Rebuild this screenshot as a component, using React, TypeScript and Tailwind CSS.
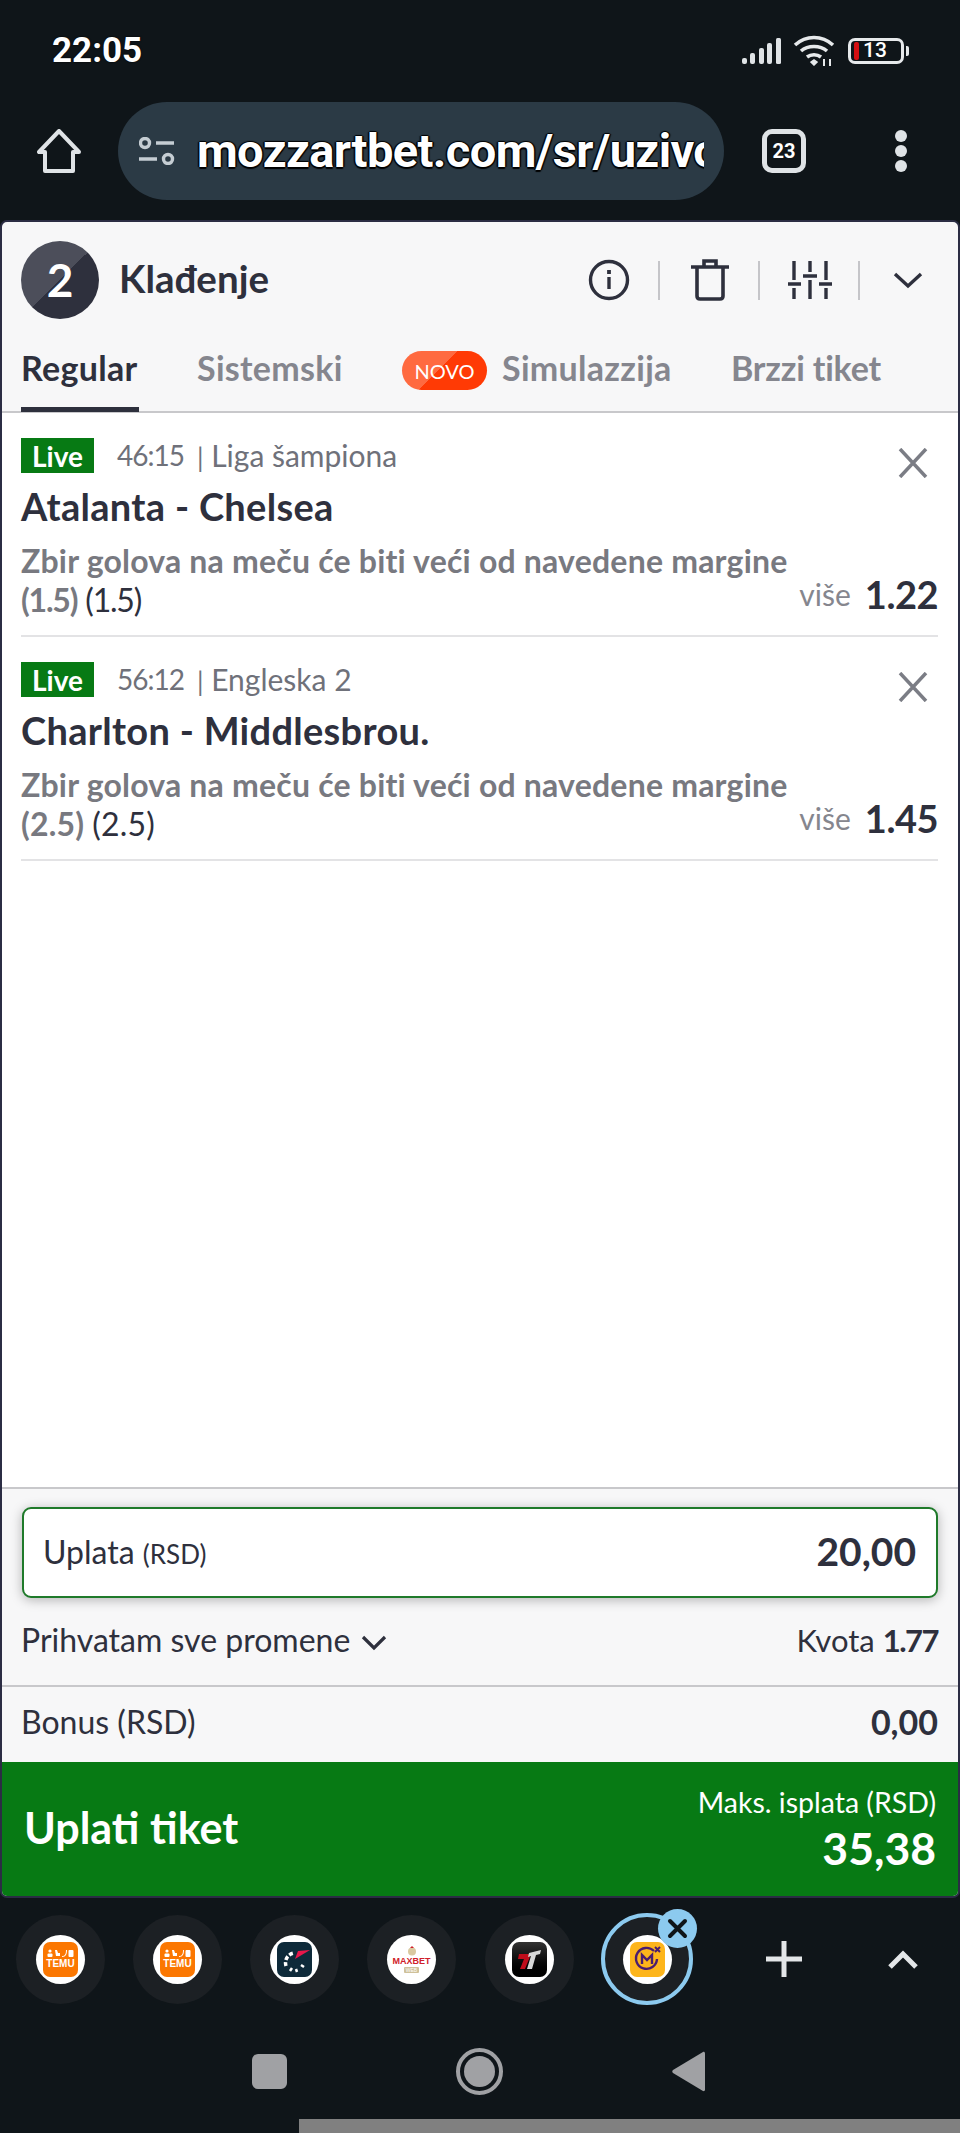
import { JSX, ReactNode } from "react";

const sans = "font-['Lato','Noto_Sans',sans-serif]";

const TemuIcon = (): JSX.Element => (
  <div className="flex h-[35px] w-[35px] flex-col items-center justify-center rounded-[7px] bg-[#fb7701] text-white">
    <svg width="27" height="9" viewBox="0 0 27 9" fill="#fff">
      <circle cx="3" cy="2" r="1.6" />
      <rect x="0.5" y="4.5" width="5" height="3.5" rx="1" />
      <path d="M8 1h2l1 3h2v3H9z" />
      <path d="M15 7c3 0 4-2 4-6h1c0 4-1 7-5 7z" />
      <rect x="21.5" y="1" width="5" height="7" rx="1" />
    </svg>
    <span className="font-['Liberation_Sans',sans-serif] text-[10px] leading-[11px] font-bold">TEMU</span>
  </div>
);

const GaugeIcon = (): JSX.Element => (
  <div className="h-[35px] w-[35px] rounded-[7px] bg-[#0e2a3a]">
    <svg width="35" height="35" viewBox="0 0 35 35" fill="none">
      <path d="M9 24a10 10 0 0 1 8-13" stroke="#fff" strokeWidth="3.5" strokeDasharray="4 2" />
      <path d="M13 29l2-3M20 30l-1-3M27 25l-3-2" stroke="#fff" strokeWidth="2.5" />
      <path d="M18 17l3-8 12-1z" fill="#e8174b" />
    </svg>
  </div>
);

const MaxbetIcon = (): JSX.Element => (
  <div className="flex h-[35px] w-[40px] flex-col items-center justify-center">
    <svg width="10" height="10" viewBox="0 0 10 10">
      <circle cx="5" cy="5.5" r="4" fill="#d9c9a0" />
      <path d="M3 2l2-2 2 2z" fill="#d0202a" />
    </svg>
    <span className="font-['Liberation_Sans',sans-serif] text-[9px] leading-[10px] font-bold text-[#d0202a]">MAXBET</span>
    <span className="mt-[1px] rounded-[1px] bg-[#cfc19a] px-[2px] font-['Liberation_Sans',sans-serif] text-[5px] leading-[6px] text-white">WEB</span>
  </div>
);

const TopIcon = (): JSX.Element => (
  <div className="h-[35px] w-[35px] rounded-[7px] bg-gradient-to-b from-[#333] to-black">
    <svg width="35" height="35" viewBox="0 0 35 35">
      <path d="M7 12h12l-6 15H8l4-10H6z" fill="#c00d1b" />
      <path d="M17 11l12-3-1 4-4 1-4 14h-5l4-13-3 1z" fill="#d8d8d8" />
    </svg>
  </div>
);

const MozzartIcon = (): JSX.Element => (
  <div className="h-[35px] w-[35px] rounded-[7px] bg-[#fdb51b]">
    <svg width="35" height="35" viewBox="0 0 35 35" fill="none">
      <path d="M24 9a10.5 10.5 0 1 0 3 8" stroke="#4b1d6e" strokeWidth="2.4" />
      <path d="M12 22v-9l5 5 5-5v9" stroke="#4b1d6e" strokeWidth="2.4" />
      <path d="M25 5l5 5M30 5l-5 5" stroke="#4b1d6e" strokeWidth="2" />
    </svg>
  </div>
);

const TabCircle = ({ children, active }: { children: ReactNode; active?: boolean }): JSX.Element => (
  <div
    className={
      active
        ? "relative flex h-[92px] w-[92px] shrink-0 items-center justify-center rounded-full border-[4px] border-[#8ccaef] bg-[#1c2024]"
        : "flex h-[89px] w-[89px] shrink-0 items-center justify-center rounded-full bg-[#1c2024]"
    }
  >
    <div className="flex h-[49px] w-[49px] items-center justify-center rounded-full bg-white">{children}</div>
    {active && (
      <div className="absolute top-[-8px] right-[-8px] flex h-[39px] w-[39px] items-center justify-center rounded-full bg-[#8ccaef]">
        <svg width="21" height="21" viewBox="0 0 21 21" stroke="#0f1519" strokeWidth="4" strokeLinecap="round">
          <path d="M3 3l15 15M18 3L3 18" />
        </svg>
      </div>
    )}
  </div>
);

const Bet = ({
  time,
  league,
  match,
  margin,
  marginClass,
  odd,
}: {
  time: string;
  league: string;
  match: string;
  margin: string;
  marginClass: string;
  odd: string;
}): JSX.Element => (
  <div className="flex h-[224px] flex-col border-b-2 border-[#e3e3e5] pt-[25px]">
    <div className="flex h-[35px] items-start">
      <div className="flex h-[35px] w-[73px] items-center justify-center bg-[#077a14] text-[28px] leading-none font-bold text-white">
        Live
      </div>
      <span className="ml-[23px] text-[28px] leading-[35px] tracking-[-1px] text-[#6f717a]">{time}</span>
      <span className="ml-[13px] text-[30px] leading-[35px] text-[#6f717a]">
        <span className="text-[26px]">|</span> {league}
      </span>
      <svg className="mt-[10px] mr-[10px] ml-auto" width="30" height="30" viewBox="0 0 30 30" stroke="#7b7d85" strokeWidth="3.5">
        <path d="M2 1l26 28M28 1L2 29" />
      </svg>
    </div>
    <div className="mt-[11px] text-[38px] leading-[44px] font-bold tracking-[0.3px] text-[#2e303d]">{match}</div>
    <div className="mt-[13px] flex items-end justify-between">
      <div className="w-[780px] text-[32px] leading-[39px] font-bold tracking-[0.2px] whitespace-nowrap text-[#787980]">
        Zbir golova na meču će biti veći od navedene margine
        <br />
        <span className={marginClass}>({margin})</span>{" "}
        <span className={`font-normal text-[#2e303d] ${marginClass}`}>({margin})</span>
      </div>
      <div className="flex items-center pb-[3px]">
        <span className="text-[30px] leading-[44px] text-[#85868e]">više</span>
        <span className="ml-[14px] text-[38px] leading-[44px] font-bold tracking-[-0.5px] text-[#2e303d]">{odd}</span>
      </div>
    </div>
  </div>
);

export default function App(): JSX.Element {
  return (
    <div className={`flex h-[2133px] w-[960px] flex-col overflow-hidden bg-[#0f1519] ${sans}`}>
      {/* status bar */}
      <div className="flex h-[102px] shrink-0 items-start pt-[31px] pl-[52px]">
        <span className="font-['Roboto',sans-serif] text-[35px] leading-[40px] font-bold text-white [text-shadow:0_0_2px_#000]">
          22:05
        </span>
        <div className="mt-[4px] ml-auto flex items-center pr-[51px]">
          <svg width="40" height="26" viewBox="0 0 40 26" fill="#dfe3e6">
            <rect x="0" y="20" width="5" height="6" rx="2" />
            <rect x="8" y="15" width="5" height="11" rx="2" />
            <rect x="17" y="10" width="5" height="16" rx="2" />
            <rect x="25" y="5" width="5" height="21" rx="2" />
            <rect x="34" y="0" width="5" height="26" rx="1.5" />
          </svg>
          <svg className="ml-[11px]" width="42" height="31" viewBox="0 0 42 31" fill="none" stroke="#e6e9eb" strokeWidth="3.6">
            <path d="M2 10c11-10 27-10 38 0" />
            <path d="M8 16c7-6 19-6 26 0" />
            <path d="M14 22c4-3 10-3 14 0" />
            <path d="M18 27l3-2 3 2-3 3z" fill="#e6e9eb" strokeWidth="1.5" />
            <path d="M31 31v-7M37 31v-7" strokeWidth="2" />
          </svg>
          <div className="ml-[13px] flex h-[26px] w-[56px] items-center rounded-[7px] border-[3px] border-[#e6e9eb] pl-[3px]">
            <div className="h-[18px] w-[5px] rounded-[2px] bg-[#d50f12]" />
            <span className="ml-[4px] font-['Roboto',sans-serif] text-[21px] leading-none font-medium text-white">13</span>
          </div>
          <div className="ml-[2px] h-[10px] w-[3px] rounded-r-[2px] bg-[#e6e9eb]" />
        </div>
      </div>

      {/* address bar */}
      <div className="flex h-[98px] shrink-0 items-center pl-[37px]">
        <svg width="44" height="44" viewBox="0 0 44 44" fill="none" stroke="#dfe3e6" strokeWidth="4" strokeLinejoin="round">
          <path d="M22 2L2 23h6v19h28V23h6z" />
        </svg>
        <div className="ml-[37px] flex h-[98px] w-[606px] items-center rounded-full bg-[#2b3a45] pl-[21px]">
          <svg width="36" height="28" viewBox="0 0 36 28" fill="none" stroke="#c5cdd3" strokeWidth="3.4">
            <circle cx="6" cy="6" r="4.5" />
            <path d="M17 6h18M0 22h18" />
            <circle cx="29" cy="22" r="4.5" />
          </svg>
          <div className="ml-[22px] w-[507px] overflow-hidden font-['Roboto',sans-serif] text-[47px] leading-[56px] font-bold tracking-[-0.6px] whitespace-nowrap text-white [text-shadow:-1.5px_0_1px_#000,1.5px_0_1px_#000,0_1.5px_1px_#000,0_-1.5px_1px_#000]">
            mozzartbet.com/sr/uzivo
          </div>
        </div>
        <div className="ml-[38px] flex h-[44px] w-[44px] items-center justify-center rounded-[10px] border-[5px] border-[#dfe3e6] font-['Roboto',sans-serif] text-[20px] leading-none font-bold text-white">
          23
        </div>
        <div className="ml-[89px] flex flex-col gap-[3px]">
          <div className="h-[12px] w-[12px] rounded-full bg-[#dfe3e6]" />
          <div className="h-[12px] w-[12px] rounded-full bg-[#dfe3e6]" />
          <div className="h-[12px] w-[12px] rounded-full bg-[#dfe3e6]" />
        </div>
      </div>
      <div className="h-[20px] shrink-0" />

      {/* betting panel */}
      <div className="flex h-[1678px] shrink-0 flex-col overflow-hidden rounded-[7px] border-2 border-[#2b2d44] bg-[#f7f7f8]">
        <div className="flex h-[116px] shrink-0 items-center pr-[35px] pl-[19px]">
          <div className="flex h-[78px] w-[78px] items-center justify-center rounded-full bg-[linear-gradient(135deg,#4c4e5a_50%,#2e303d_50%)] text-[46px] leading-none font-bold text-white">
            2
          </div>
          <span className="mb-[4px] ml-[20px] text-[38.5px] leading-[44px] font-bold text-[#2e303d]">Klađenje</span>
          <div className="ml-auto flex items-center">
            <svg width="42" height="42" viewBox="0 0 42 42" fill="none" stroke="#2e303d" strokeWidth="3.4">
              <circle cx="21" cy="21" r="18.5" />
              <path d="M21 18v12" />
              <path d="M21 11v4" strokeWidth="3.8" />
            </svg>
            <div className="ml-[28px] h-[39px] w-[2px] bg-[#c5c5c9]" />
            <svg className="ml-[31px]" width="38" height="42" viewBox="0 0 38 42" fill="none" stroke="#2e303d" strokeWidth="3.6">
              <path d="M0 8h38M13 8V2h12v6" />
              <path d="M6 8v29c0 2 1 3 3 3h20c2 0 3-1 3-3V8" />
            </svg>
            <div className="ml-[29px] h-[39px] w-[2px] bg-[#c5c5c9]" />
            <svg className="ml-[28px]" width="44" height="38" viewBox="0 0 44 38" fill="none" stroke="#2e303d" strokeWidth="3.4">
              <path d="M6 0v19M6 27v11M0 23h13" />
              <path d="M22 0v11M22 19v19M15 15h14" />
              <path d="M38 0v19M38 27v11M31 23h13" />
            </svg>
            <div className="ml-[26px] h-[39px] w-[2px] bg-[#c5c5c9]" />
            <svg className="ml-[33px]" width="30" height="17" viewBox="0 0 30 17" fill="none" stroke="#2e303d" strokeWidth="3.4">
              <path d="M2 2l13 12L28 2" />
            </svg>
          </div>
        </div>

        {/* tabs */}
        <div className="flex h-[75px] shrink-0 border-b-2 border-[#c8c8cb] pl-[19px] text-[34px] leading-[36px] font-bold tracking-[0.3px] whitespace-nowrap text-[#85868e]">
          <div className="h-[74px] w-[118px] border-b-[5px] border-[#2e303d] pt-[12px] text-[#2e303d]">Regular</div>
          <div className="ml-[58px] w-[145px] pt-[12px]">Sistemski</div>
          <div className="mt-[13px] ml-[60px] flex h-[39px] w-[85px] items-center justify-center rounded-full bg-[linear-gradient(135deg,#ff6a40_45%,#ff3a05_45%)] text-[20px] leading-none font-normal tracking-normal text-white">
            NOVO
          </div>
          <div className="ml-[15px] w-[170px] pt-[12px]">Simulazzija</div>
          <div className="ml-[59px] pt-[12px] tracking-[-0.2px]">Brzzi tiket</div>
        </div>

        {/* bets */}
        <div className="flex-1 bg-white pr-[20px] pl-[19px]">
          <Bet time="46:15" league="Liga šampiona" match="Atalanta - Chelsea" margin="1.5" marginClass="tracking-[-1.2px]" odd="1.22" />
          <Bet time="56:12" league="Engleska 2" match="Charlton - Middlesbrou." margin="2.5" marginClass="tracking-[0.2px]" odd="1.45" />
        </div>

        {/* footer */}
        <div className="shrink-0 border-t-2 border-[#c8c8cb]">
          <div className="px-[20px] pt-[18px]">
            <div className="flex h-[91px] items-center justify-between rounded-[9px] border-2 border-[#1f7a2a] bg-white pr-[20px] pb-[2px] pl-[19px] shadow-[0_2px_12px_rgba(0,0,0,0.28)]">
              <span className="text-[32px] text-[#2e303d]">
                Uplata <span className="text-[26px]">(RSD)</span>
              </span>
              <span className="text-[39px] font-bold text-[#2e303d]">20,00</span>
            </div>
          </div>
          <div className="flex h-[87px] items-center justify-between pr-[20px] pb-[3px] pl-[19px] text-[32px] text-[#2e303d]">
            <span className="flex items-center">
              Prihvatam sve promene
              <svg className="mt-[6px] ml-[11px]" width="26" height="16" viewBox="0 0 26 16" fill="none" stroke="#2e303d" strokeWidth="3.2">
                <path d="M2 2l11 11L24 2" />
              </svg>
            </span>
            <span className="text-[31px]">
              Kvota <span className="font-bold tracking-[-1.5px]">1.77</span>
            </span>
          </div>
          <div className="flex h-[77px] items-center justify-between border-t-2 border-[#c8c8cb] pr-[20px] pb-[6px] pl-[19px] text-[32px] text-[#2e303d]">
            <span>Bonus (RSD)</span>
            <span className="text-[34px] font-bold">0,00</span>
          </div>
          <div className="flex h-[134px] items-center justify-between bg-[#077a14] pr-[22px] pl-[22px] text-white">
            <span className="mb-[2px] text-[43px] leading-[50px] font-bold">Uplati tiket</span>
            <div className="flex flex-col items-end">
              <span className="text-[28.5px] leading-[32px]">Maks. isplata (RSD)</span>
              <span className="mt-[5px] text-[44.5px] leading-[50px] font-bold">35,38</span>
            </div>
          </div>
        </div>
      </div>

      {/* tab strip */}
      <div className="flex h-[122px] shrink-0 items-center pl-[16px]">
        <TabCircle>
          <TemuIcon />
        </TabCircle>
        <div className="ml-[28px]">
          <TabCircle>
            <TemuIcon />
          </TabCircle>
        </div>
        <div className="ml-[28px]">
          <TabCircle>
            <GaugeIcon />
          </TabCircle>
        </div>
        <div className="ml-[28px]">
          <TabCircle>
            <MaxbetIcon />
          </TabCircle>
        </div>
        <div className="ml-[29px]">
          <TabCircle>
            <TopIcon />
          </TabCircle>
        </div>
        <div className="ml-[27px]">
          <TabCircle active>
            <MozzartIcon />
          </TabCircle>
        </div>
        <svg className="ml-[73px]" width="36" height="36" viewBox="0 0 36 36" stroke="#e3e6e8" strokeWidth="5">
          <path d="M18 0v36M0 18h36" />
        </svg>
        <svg className="ml-[86px]" width="30" height="19" viewBox="0 0 30 19" fill="none" stroke="#e3e6e8" strokeWidth="5">
          <path d="M2 17L15 4l13 13" />
        </svg>
      </div>

      {/* system nav */}
      <div className="flex h-[99px] shrink-0 items-center pt-[3px] pl-[252px]">
        <div className="h-[35px] w-[35px] rounded-[6px] bg-[#a0a1a4]" />
        <div className="ml-[169px] flex h-[47px] w-[47px] items-center justify-center rounded-full border-[4px] border-[#a0a1a4]">
          <div className="h-[31px] w-[31px] rounded-full bg-[#a0a1a4]" />
        </div>
        <svg className="ml-[169px]" width="33" height="41" viewBox="0 0 33 41" fill="#a0a1a4">
          <path d="M31 1c1-.5 2 .3 2 1.500v36c0 1.200-1 2-2 1.500L1 22c-1-.8-1-2 0-3z" />
        </svg>
      </div>
      <div className="ml-[299px] h-[14px] shrink-0 bg-[#808080]" />
    </div>
  );
}
